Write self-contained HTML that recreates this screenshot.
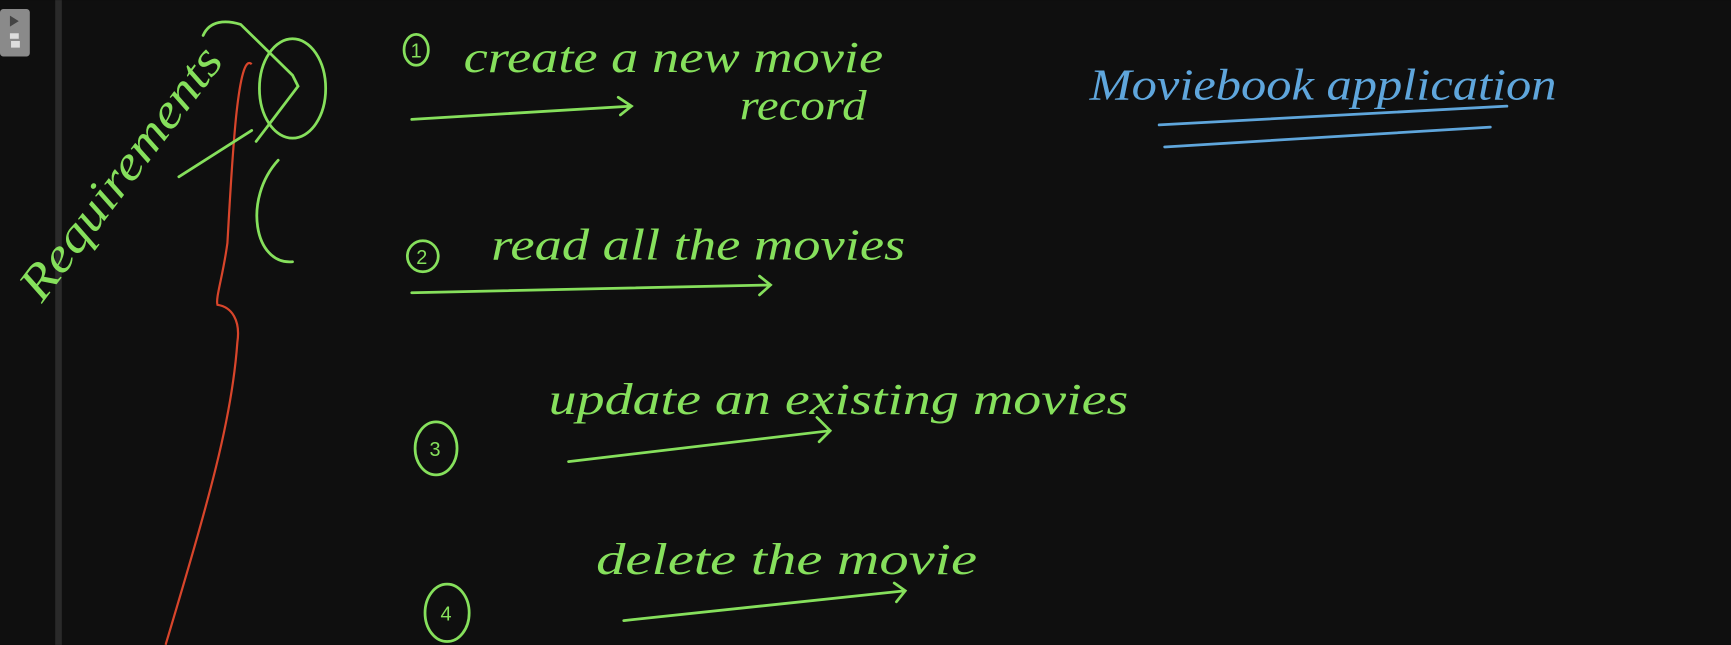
<!DOCTYPE html>
<html><head><style>
html,body{margin:0;padding:0;background:#0f0f0f;width:1731px;height:645px;overflow:hidden}
svg{display:block}
.g{fill:#86e05c;font-family:"Liberation Serif",serif;font-style:italic}
.b{fill:#5fa6dc;font-family:"Liberation Serif",serif;font-style:italic}
</style></head><body>
<svg width="1731" height="645" viewBox="0 0 1568 584" xmlns="http://www.w3.org/2000/svg">
<rect width="1568" height="584" fill="#0f0f0f"/>
<rect x="50" y="0" width="6" height="584" fill="#2a2a2a"/>
<rect x="0" y="8" width="27" height="43" rx="3" fill="#8a8a8a"/>
<path d="M9 14 L17 19 L9 24Z" fill="#444"/>
<rect x="9" y="30" width="8" height="5" fill="#ddd"/><rect x="10" y="37" width="8" height="6" fill="#ddd"/>
<path d="M228 58 C215 45 210 150 206 220 C202 250 195 270 197 276 C210 278 218 290 215 310 C210 380 190 450 150 584" stroke="#d8452b" stroke-width="2" fill="none"/>
<g stroke="#86e05c" stroke-width="2.5" fill="none" stroke-linecap="round">
<path d="M184 32 C190 18 205 18 218 22 L265 68 L270 78 L232 128"/>
<ellipse cx="265" cy="80" rx="30" ry="45"/>
<path d="M162 160 L228 118"/>
<path d="M252 145 C220 180 230 240 265 237"/>
<ellipse cx="377" cy="45" rx="11" ry="14"/>
<ellipse cx="383" cy="232" rx="14" ry="14"/>
<ellipse cx="395" cy="406" rx="19" ry="24"/>
<ellipse cx="405" cy="555" rx="20" ry="26"/>
<path d="M373 108 L572 96 M560 88 L572 96 L562 104"/>
<path d="M373 265 L698 258 M688 250 L698 258 L688 267"/>
<path d="M515 418 L752 390 M740 378 L752 390 L742 400"/>
<path d="M565 562 L820 535 M810 528 L820 535 L812 545"/>
</g>
<g fill="#86e05c" font-family="Liberation Sans,sans-serif" font-size="18"><text x="372" y="52">1</text><text x="377" y="239">2</text><text x="389" y="413">3</text><text x="399" y="562">4</text></g>
<text class="g" x="38" y="275" font-size="44" transform="rotate(-53 38 275)" textLength="275" lengthAdjust="spacingAndGlyphs">Requirements</text>
<text class="g" x="420" y="65" font-size="40" textLength="380" lengthAdjust="spacingAndGlyphs">create a new movie</text>
<text class="g" x="670" y="108" font-size="38" textLength="115" lengthAdjust="spacingAndGlyphs">record</text>
<text class="g" x="445" y="235" font-size="40" textLength="375" lengthAdjust="spacingAndGlyphs">read all the movies</text>
<text class="g" x="497" y="375" font-size="40" textLength="525" lengthAdjust="spacingAndGlyphs">update an existing movies</text>
<text class="g" x="540" y="520" font-size="40" textLength="345" lengthAdjust="spacingAndGlyphs">delete the movie</text>
<text class="b" x="987" y="90" font-size="40" textLength="423" lengthAdjust="spacingAndGlyphs">Moviebook application</text>
<g stroke="#5fa6dc" stroke-width="2.5" fill="none" stroke-linecap="round">
<path d="M1050 113 L1365 96"/><path d="M1055 133 L1350 115"/>
</g>
</svg>
</body></html>
